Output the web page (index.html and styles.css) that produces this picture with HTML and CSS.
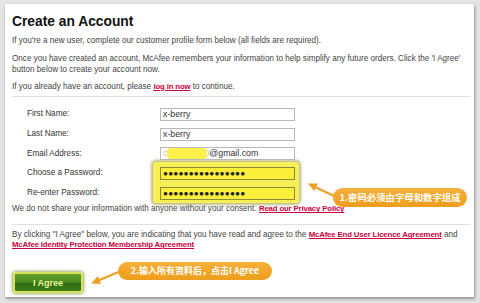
FILE: index.html
```html
<!DOCTYPE html>
<html>
<head>
<meta charset="utf-8">
<link rel="stylesheet" href="styles.css">
</head>
<body>
<div class="page">
  <div class="panel">
    <h1 class="title">Create an Account</h1>
    <p class="p1">If you're a new user, complete our customer profile form below (all fields are required).</p>
    <p class="p2">Once you have created an account, McAfee remembers your information to help simplify any future orders. Click the 'I Agree'<br>button below to create your account now.</p>
    <p class="p3">If you already have an account, please <a class="link">log in now</a> to continue.</p>
    <div class="sep sep1"></div>
    <div class="form">
      <span class="label">First Name:</span><span class="field">x-berry</span>
      <span class="label">Last Name:</span><span class="field">x-berry</span>
      <span class="label">Email Address:</span><span class="field"><span class="faint">c</span><span class="blot"></span><span class="hidden0">0</span>@gmail.com</span>
      <span class="label">Choose a Password:</span><span class="field pw">●●●●●●●●●●●●●●●●</span>
      <span class="label">Re-enter Password:</span><span class="field pw">●●●●●●●●●●●●●●●●</span>
    </div>
    <p class="privacy">We do not share your information with anyone without your consent. <a class="link">Read our Privacy Policy</a></p>
    <div class="sep sep2"></div>
    <p class="terms">By clicking "I Agree" below, you are indicating that you have read and agree to the <a class="link">McAfee End User Licence Agreement</a> and<br><a class="link">McAfee Identity Protection Membership Agreement</a></p>
    <button class="agree">I Agree</button>
  </div>

  <div class="highlight"></div>

  <div class="callout c1">1.密码必须由字母和数字组成</div>
  <div class="callout c2">2.输入所有资料后，点击I Agree</div>

  <svg class="arrows" width="480" height="303" viewBox="0 0 480 303">
    <line x1="334" y1="196" x2="313" y2="186" stroke="#f0a023" stroke-width="2.2" stroke-linecap="round"/>
    <polygon points="308,183.5 318,183.5 314,191" fill="#f0a023"/>
    <line x1="121" y1="271" x2="97" y2="281" stroke="#f0a023" stroke-width="2.2" stroke-linecap="round"/>
    <polygon points="91,283.5 98,276 101,284" fill="#f0a023"/>
  </svg>
</div>
</body>
</html>
```

FILE: styles.css
```css
* { box-sizing: border-box; }
html, body { margin: 0; padding: 0; }
body {
  width: 480px;
  height: 303px;
  overflow: hidden;
  background: #e4e4e4;
  font-family: "Liberation Sans", Arial, sans-serif;
}
.page {
  position: relative;
  width: 480px;
  height: 303px;
  padding: 4px 0 0 5px;
}
.panel {
  width: 469px;
  height: 293px;
  background: #fff;
  box-shadow: 1px 2px 3px rgba(0,0,0,0.35), 0 0 1px rgba(0,0,0,0.2);
  padding: 9px 0 0 7px;
  color: #444;
  font-size: 8.15px;
  line-height: 10.6px;
}
.title {
  margin: 0;
  font-size: 13.8px;
  line-height: 18px;
  font-weight: bold;
  color: #111;
}
p { margin: 0; }
.p1 { margin-top: 5px; }
.p2 { margin-top: 7.6px; }
.p3 { margin-top: 6.5px; }
.link {
  color: #c8003c;
  font-weight: bold;
  font-size: 7.8px;
  letter-spacing: -0.15px;
  text-decoration: underline;
}
.sep {
  height: 1px;
  background: #e0e0e0;
  margin-right: 4px;
}
.sep1 { margin-top: 3.5px; }
.form {
  display: grid;
  grid-template-columns: 133px 135px;
  grid-auto-rows: 13px;
  row-gap: 6.6px;
  align-items: center;
  margin-top: 11.3px;
  padding-left: 15px;
  position: relative;
  z-index: 2;
}
.label {
  font-size: 8.2px;
  color: #333;
}
.field {
  height: 13px;
  border: 1px solid #b8b8b8;
  background: #fff;
  font-size: 8.8px;
  line-height: 11px;
  padding-left: 2px;
  color: #333;
  display: flex;
  align-items: center;
  white-space: nowrap;
}
.faint { color: #bbb; }
.blot {
  display: inline-block;
  width: 40px;
  height: 11px;
  background: #fff14a;
  border-radius: 4px;
  margin-right: -3px;
  position: relative;
  z-index: 1;
}
.hidden0 { color: #bbb; }
.pw {
  background: #fbef3a;
  border-color: #8b8a3c;
  font-size: 8.2px;
  letter-spacing: 0.2px;
  color: #222;
}
.privacy { margin-top: 4.6px; }
.sep2 { margin-top: 9.3px; }
.terms {
  margin-top: 5px;
  line-height: 10px;
}
.agree {
  display: block;
  margin: 22px 0 0 1px;
  width: 70px;
  height: 21px;
  border: 2px solid #d6e35a;
  border-radius: 3px;
  background: linear-gradient(#5e9e2c 0%, #4d8e1f 45%, #2f6f14 55%, #3a7a18 100%);
  box-shadow: 0 0 3px 1px rgba(120,130,40,0.7);
  color: #e8f59a;
  font-family: "Liberation Sans", Arial, sans-serif;
  font-weight: bold;
  font-size: 9px;
  padding: 0;
}
.highlight {
  position: absolute;
  left: 153px;
  top: 161.5px;
  width: 146px;
  height: 41.5px;
  background: #f6ef55;
  border-radius: 3px;
  box-shadow: 0 0 3px 2px rgba(130,130,30,0.55);
  z-index: 1;
}
.callout {
  position: absolute;
  height: 18.5px;
  border-radius: 9.5px;
  background: linear-gradient(#f5b03a, #ee9d1c);
  color: #fff;
  font-family: "Noto Sans CJK SC", "Liberation Sans", sans-serif;
  font-weight: bold;
  font-size: 9.4px;
  line-height: 18.5px;
  text-align: center;
  z-index: 3;
}
.c1 { left: 333px; top: 188px; width: 134px; }
.c2 { left: 118px; top: 261.5px; width: 154px; font-size: 9px; }
.arrows {
  position: absolute;
  left: 0;
  top: 0;
  z-index: 4;
}
```
